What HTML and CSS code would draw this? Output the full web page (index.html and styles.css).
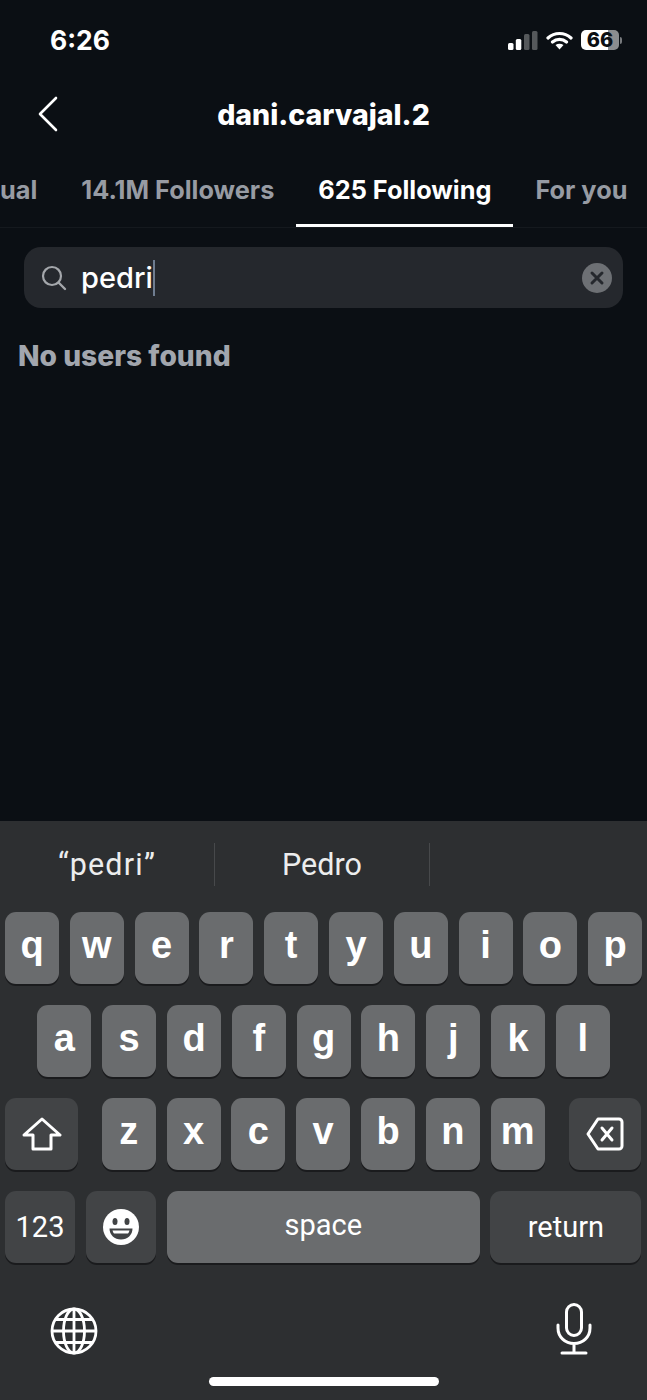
FILE: index.html
```html
<!DOCTYPE HTML>
<html>
<head>
	<meta http-equiv="content-type" content="text/html; charset=utf-8" />
	<title>Following</title>
	<link rel="stylesheet" href="styles.css">
</head>
<body>
<div class="phone">
	<div class="status">
		<span class="time">6:26</span>
		<div class="statusIcons">
			<svg class="signal" width="30" height="19" viewBox="0 0 30 19">
				<rect x="0" y="12" width="5.500" height="7" rx="1.500" fill="#fff"/>
				<rect x="7.800" y="8" width="5.500" height="11" rx="1.500" fill="#fff"/>
				<rect x="16" y="3" width="5.500" height="16" rx="1.500" fill="#55585b"/>
				<rect x="24" y="0" width="5.500" height="19" rx="1.500" fill="#55585b"/>
			</svg>
			<svg class="wifi" width="27" height="19" viewBox="0 0 27 19">
				<path d="M2 7C8.500 1 18.500 1 25 7M6.500 11C10.500 7.500 16.500 7.500 20.500 11" fill="none" stroke="#fff" stroke-width="3.200" stroke-linecap="round"/>
				<path d="M9.500 14C12 12.200 15 12.200 17.500 14L13.500 18.500Z" fill="#fff"/>
			</svg>
			<div class="battery"><span class="batteryNum">66</span></div>
			<div class="batteryTip"></div>
		</div>
	</div>

	<div class="header">
		<svg class="back" width="22" height="36" viewBox="0 0 22 36">
			<path d="M19 2L3 18L19 34" fill="none" stroke="#fff" stroke-width="2.600" stroke-linecap="round" stroke-linejoin="round"/>
		</svg>
		<h1 class="title">dani.carvajal.2</h1>
	</div>

	<div class="tabs">
		<span class="tab">ual</span>
		<span class="tab">14.1M Followers</span>
		<span class="tab tabActive">625 Following</span>
		<span class="tab">For you</span>
	</div>

	<div class="search">
		<svg class="searchIcon" width="26" height="26" viewBox="0 0 26 26">
			<circle cx="11" cy="11" r="9" fill="none" stroke="#a4a7ab" stroke-width="2.200"/>
			<path d="M17.500 17.500L24 24" stroke="#a4a7ab" stroke-width="2.400" stroke-linecap="round"/>
		</svg>
		<span class="searchText">pedri</span><span class="caret"></span>
		<svg class="clear" width="30" height="30" viewBox="0 0 30 30">
			<circle cx="15" cy="15" r="15" fill="#6d7074"/>
			<path d="M10 10L20 20M20 10L10 20" stroke="#25282d" stroke-width="3" stroke-linecap="round"/>
		</svg>
	</div>

	<p class="empty">No users found</p>

	<div class="keyboard">
		<div class="suggest">
			<span class="word wordQuoted">“pedri”</span>
			<span class="word wordMid">Pedro</span>
			<span class="word"></span>
		</div>

		<div class="row">
			<span class="key">q</span><span class="key">w</span><span class="key">e</span><span class="key">r</span><span class="key">t</span><span class="key">y</span><span class="key">u</span><span class="key">i</span><span class="key">o</span><span class="key">p</span>
		</div>
		<div class="row rowTwo">
			<span class="key">a</span><span class="key">s</span><span class="key">d</span><span class="key">f</span><span class="key">g</span><span class="key">h</span><span class="key">j</span><span class="key">k</span><span class="key">l</span>
		</div>
		<div class="row rowThree">
			<span class="key keyDark keyShift">
				<svg width="40" height="34" viewBox="0 0 40 34">
					<path d="M20 2L38 18H29V32H11V18H2Z" fill="none" stroke="#fff" stroke-width="3" stroke-linejoin="round"/>
				</svg>
			</span>
			<span class="key">z</span><span class="key">x</span><span class="key">c</span><span class="key">v</span><span class="key">b</span><span class="key">n</span><span class="key">m</span>
			<span class="key keyDark keyBack">
				<svg width="38" height="34" viewBox="0 0 38 34">
					<path d="M12 2H33A3 3 0 0 1 36 5V29A3 3 0 0 1 33 32H12L2 17Z" fill="none" stroke="#fff" stroke-width="3" stroke-linejoin="round"/>
					<path d="M16 11L26 23M26 11L16 23" stroke="#fff" stroke-width="3" stroke-linecap="round"/>
				</svg>
			</span>
		</div>
		<div class="row rowFour">
			<span class="key keyDark keyNum">123</span>
			<span class="key keyDark keyEmoji">
				<svg width="36" height="36" viewBox="0 0 36 36">
					<circle cx="18" cy="18" r="18" fill="#fff"/>
					<ellipse cx="12" cy="12.500" rx="2.500" ry="3.500" fill="#414345"/>
					<ellipse cx="24" cy="12.500" rx="2.500" ry="3.500" fill="#414345"/>
					<path d="M6.500 19.500H29.500C29.500 26 24.500 30.500 18 30.500C11.500 30.500 6.500 26 6.500 19.500Z" fill="#414345"/>
					<path d="M9.500 21.500H26.500C26 23 25.500 24 25 24.500H11C10.500 24 10 23 9.500 21.500Z" fill="#fff"/>
				</svg>
			</span>
			<span class="key keySpace">space</span>
			<span class="key keyDark keyReturn">return</span>
		</div>

		<div class="kbBottom">
			<svg class="globe" width="48" height="48" viewBox="0 0 48 48" fill="none" stroke="#fff" stroke-width="2.800">
				<circle cx="24" cy="24" r="22"/>
				<ellipse cx="24" cy="24" rx="10.500" ry="22"/>
				<path d="M24 2V46M2 24H46M5.500 12.500H42.500M5.500 35.500H42.500"/>
			</svg>
			<svg class="mic" width="36" height="52" viewBox="0 0 36 52" fill="none" stroke="#fff" stroke-width="3" stroke-linecap="round">
				<rect x="10.500" y="1.500" width="15" height="31" rx="7.500"/>
				<path d="M2 22V25C2 34 9 40.500 18 40.500C27 40.500 34 34 34 25V22M18 40.500V49.500M6 50H30"/>
			</svg>
		</div>
		<div class="homeBar"></div>
	</div>
</div>
</body>
</html>
```

FILE: styles.css
```css
* {
	margin: 0;
	padding: 0;
	box-sizing: border-box;
}

html,body {
	width: 100%;
	height: 100%;
	background-color: #0b0f14;
}

.phone {
	width: 647px;
	height: 1400px;
	overflow: hidden;
	display: flex;
	flex-direction: column;
	font-family: Inter, "Liberation Sans", sans-serif;
	color: white;
}

/* Status bar */

.status {
	height: 80px;
	display: flex;
	justify-content: space-between;
	align-items: center;
	padding: 0 25px 0 50px;
}

.time {
	font-size: 26.500px;
	font-weight: 700;
}

.statusIcons {
	display: flex;
	align-items: center;
}

.signal {
	margin-right: 8px;
}

.wifi {
	margin-right: 8px;
}

.battery {
	width: 38px;
	height: 20px;
	border-radius: 5px;
	background: linear-gradient(to right, #fff 70%, #8b8d90 70%);
	display: flex;
	align-items: center;
	justify-content: center;
}

.batteryNum {
	color: #0b0f14;
	font-size: 20px;
	line-height: 20px;
	font-weight: 800;
}

.batteryTip {
	width: 2px;
	height: 7px;
	margin-left: 1px;
	background-color: #77797c;
	border-radius: 0 2px 2px 0;
}

/* Title */

.header {
	height: 70px;
	position: relative;
	display: flex;
	align-items: center;
	justify-content: center;
	padding-bottom: 2px;
}

.back {
	position: absolute;
	left: 37px;
	top: 16px;
}

.title {
	font-size: 28.500px;
	font-weight: 800;
}

/* Tabs */

.tabs {
	height: 78px;
	display: flex;
	align-items: center;
	gap: 44px;
	border-bottom: 1px solid #15191e;
	white-space: nowrap;
	padding-top: 2px;
}

.tab {
	font-size: 25.300px;
	font-weight: 700;
	color: #979ba3;
}

.tabActive {
	color: white;
	position: relative;
}

.tabActive:after {
	content: "";
	position: absolute;
	left: -22px;
	right: -22px;
	bottom: -22px;
	height: 3px;
	background-color: white;
}

/* Search */

.search {
	height: 61px;
	margin: 19px 24px 0;
	padding: 0 11px 0 17px;
	border-radius: 17px;
	background-color: #25282d;
	display: flex;
	align-items: center;
}

.searchIcon {
	margin-right: 14px;
}

.searchText {
	font-size: 29px;
	font-weight: 500;
	color: white;
}

.caret {
	width: 2px;
	height: 36px;
	background-color: #6f7d90;
}

.clear {
	margin-left: auto;
}

.empty {
	margin: 31px 0 0 18px;
	font-size: 28.200px;
	font-weight: 800;
	color: #a2a6ae;
	height: 34px;
	line-height: 34px;
}

/* Keyboard */

.keyboard {
	margin-top: auto;
	height: 579px;
	background-color: #2d2f31;
	display: flex;
	flex-direction: column;
}

.suggest {
	height: 91px;
	display: grid;
	grid-template-columns: 214px 216px 1fr;
	padding-bottom: 4px;
	align-items: center;
	font-family: Roboto, "Liberation Sans", sans-serif;
}

.word {
	font-size: 30.500px;
	color: #eceded;
	text-align: center;
	height: 43px;
	line-height: 43px;
}

.wordQuoted {
	letter-spacing: 1.200px;
}

.wordMid {
	border-left: 1px solid #47494b;
	border-right: 1px solid #47494b;
}

.row {
	display: flex;
	gap: 10.800px;
	height: 72px;
	margin-bottom: 21px;
	padding-left: 5px;
}

.rowTwo {
	padding-left: 37.400px;
}

.key {
	width: 54px;
	height: 72px;
	flex: none;
	border-radius: 11px;
	background-color: #6a6c6e;
	box-shadow: 0 2px 0 #1a1b1d;
	display: flex;
	align-items: center;
	justify-content: center;
	font-family: "Liberation Sans", sans-serif;
	font-size: 38px;
	font-weight: 700;
	color: white;
	padding-bottom: 6px;
}

.keyDark {
	background-color: #424446;
	padding-bottom: 0;
}

.keyShift {
	width: 73px;
	margin-right: 13px;
}

.keyBack {
	width: 72px;
	margin-left: 13.500px;
}

.keyNum,.keyReturn,.keySpace {
	font-family: Roboto, "Liberation Sans", sans-serif;
	font-weight: 400;
	font-size: 29px;
}

.keyNum {
	width: 70px;
}

.keyEmoji {
	width: 70.500px;
}

.keySpace {
	width: 312.500px;
	padding-bottom: 4px;
}

.keyReturn {
	width: 151px;
}

.rowFour {
	margin-bottom: 0;
}

.kbBottom {
	display: flex;
	justify-content: space-between;
	align-items: flex-end;
	padding: 0 55px 0 50px;
	margin-top: 41px;
	height: 51px;
}

.homeBar {
	width: 230px;
	height: 9px;
	margin: 22px auto 0;
	border-radius: 5px;
	background-color: white;
}
```
